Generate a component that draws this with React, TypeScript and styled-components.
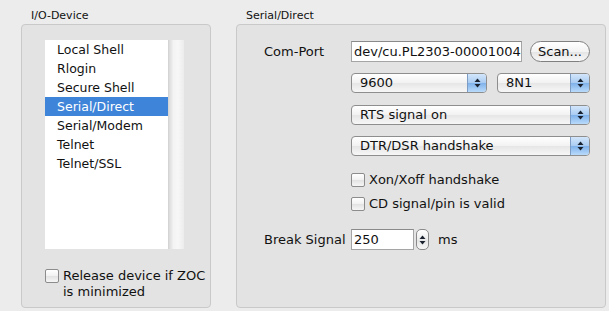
import styled, { createGlobalStyle } from 'styled-components';

const GlobalStyle = createGlobalStyle`
  html, body {
    margin: 0;
    padding: 0;
    background: #ececec;
    font-family: "DejaVu Sans", "Liberation Sans", sans-serif;
    color: #111;
  }
`;

const devices = ['Local Shell', 'Rlogin', 'Secure Shell', 'Serial/Direct', 'Serial/Modem', 'Telnet', 'Telnet/SSL'];

const Window = styled.div`
  width: 609px;
  height: 311px;
  display: flex;
  gap: 25px;
  padding: 9px 0 0 21px;
  box-sizing: border-box;
  overflow: hidden;
`;

const Group = styled.div<{ w: number }>`
  width: ${(p) => p.w}px;
  display: flex;
  flex-direction: column;
`;

const Legend = styled.div`
  font-size: 11px;
  height: 15px;
  line-height: 13px;
  padding-left: 10px;
`;

const Box = styled.div`
  height: 284px;
  background: #e3e3e3;
  border: 1px solid #c9c9c9;
  border-radius: 4px;
  box-sizing: border-box;
  display: flex;
  flex-direction: column;
`;

const LeftBox = styled(Box)`
  padding: 15px 0 0 23px;
`;

const ListFrame = styled.div`
  width: 139px;
  height: 209px;
  background: #fff;
  display: flex;
`;

const ListItems = styled.div`
  flex: 1;
  display: flex;
  flex-direction: column;
`;

const Item = styled.div<{ selected?: boolean }>`
  height: 19px;
  line-height: 19px;
  font-size: 12.5px;
  padding-left: 12px;
  background: ${(p) => (p.selected ? '#3e84d9' : 'transparent')};
  color: ${(p) => (p.selected ? '#fff' : '#111')};
`;

const ScrollTrack = styled.div`
  width: 15px;
  background: linear-gradient(90deg, #dadada 0%, #f4f4f4 30%, #f7f7f7 60%, #ececec 100%);
  border-left: 1px solid #d4d4d4;
`;

const CheckRow = styled.label<{ top: number }>`
  display: flex;
  align-items: flex-start;
  gap: 4px;
  margin-top: ${(p) => p.top}px;
  font-size: 13px;
  line-height: 16px;
`;

const CheckBox = styled.span`
  width: 12px;
  height: 12px;
  border: 1px solid #8c8c8c;
  border-radius: 2px;
  background: linear-gradient(180deg, #ffffff 0%, #f1f1f1 50%, #e2e2e2 51%, #f6f6f6 100%);
  flex-shrink: 0;
  margin-top: 1px;
`;

const RightBox = styled(Box)`
  padding: 16px 0 0 27px;
`;

const Row = styled.div<{ top: number }>`
  display: flex;
  align-items: center;
  margin-top: ${(p) => p.top}px;
`;

const Label = styled.div`
  width: 87px;
  font-size: 13px;
`;

const Controls = styled.div<{ top: number; gap?: number }>`
  display: flex;
  align-items: center;
  gap: ${(p) => p.gap ?? 8}px;
  margin-left: 87px;
  margin-top: ${(p) => p.top}px;
`;

const TextField = styled.div<{ w: number }>`
  width: ${(p) => p.w}px;
  height: 21px;
  box-sizing: border-box;
  background: #fff;
  border: 1px solid #a5a5a5;
  border-top-color: #8a8a8a;
  font-size: 13px;
  line-height: 19px;
  padding-left: 2px;
  overflow: hidden;
  white-space: nowrap;
`;

const ScanButton = styled.div`
  width: 60px;
  height: 21px;
  margin-left: 8px;
  box-sizing: border-box;
  border: 1px solid #808080;
  border-radius: 11px;
  background: linear-gradient(180deg, #ffffff 0%, #f3f3f3 50%, #e4e4e4 51%, #f8f8f8 100%);
  font-size: 13px;
  line-height: 19px;
  text-align: center;
`;

const Popup = styled.div<{ w: number }>`
  width: ${(p) => p.w}px;
  height: 20px;
  box-sizing: border-box;
  border: 1px solid #8e8e8e;
  border-radius: 4px;
  background: linear-gradient(180deg, #ffffff 0%, #f2f2f2 50%, #e6e6e6 51%, #f7f7f7 100%);
  display: flex;
  overflow: hidden;
  font-size: 13px;
  line-height: 18px;
`;

const PopupText = styled.div`
  flex: 1;
  padding-left: 8px;
`;

const PopupArrows = styled.div`
  width: 18px;
  border-left: 1px solid #7d9cc4;
  background: linear-gradient(180deg, #d3e6fb 0%, #a9cbf1 50%, #7fb1ea 51%, #b9dbfb 100%);
  display: flex;
  align-items: center;
  justify-content: center;
`;

const Arrows = () => (
  <svg width="7" height="10" viewBox="0 0 7 10">
    <path d="M3.5 0.5 L6.5 4 L0.5 4 Z" fill="#1a2230" />
    <path d="M3.5 9.5 L6.5 6 L0.5 6 Z" fill="#1a2230" />
  </svg>
);

const Stepper = styled.div`
  width: 13px;
  height: 21px;
  box-sizing: border-box;
  border: 1px solid #8a8a8a;
  border-radius: 5px;
  background: linear-gradient(180deg, #ffffff 0%, #ececec 50%, #e4e4e4 51%, #f7f7f7 100%);
  display: flex;
  align-items: center;
  justify-content: center;
  margin-left: 2px;
`;

const Unit = styled.div`
  font-size: 13px;
  margin-left: 9px;
`;

const PopupBox = ({ w, text }: { w: number; text: string }) => (
  <Popup w={w}>
    <PopupText>{text}</PopupText>
    <PopupArrows>
      <Arrows />
    </PopupArrows>
  </Popup>
);

export default function App() {
  return (
    <>
      <GlobalStyle />
      <Window>
        <Group w={190}>
          <Legend>I/O-Device</Legend>
          <LeftBox>
            <ListFrame>
              <ListItems>
                {devices.map((d) => (
                  <Item key={d} selected={d === 'Serial/Direct'}>
                    {d}
                  </Item>
                ))}
              </ListItems>
              <ScrollTrack />
            </ListFrame>
            <CheckRow top={19}>
              <CheckBox />
              <span>
                Release device if ZOC
                <br />
                is minimized
              </span>
            </CheckRow>
          </LeftBox>
        </Group>
        <Group w={370}>
          <Legend>Serial/Direct</Legend>
          <RightBox>
            <Row top={0}>
              <Label>Com-Port</Label>
              <TextField w={171}>dev/cu.PL2303-00001004</TextField>
              <ScanButton>Scan...</ScanButton>
            </Row>
            <Controls top={11} gap={10}>
              <PopupBox w={136} text="9600" />
              <PopupBox w={93} text="8N1" />
            </Controls>
            <Controls top={12}>
              <PopupBox w={239} text="RTS signal on" />
            </Controls>
            <Controls top={11}>
              <PopupBox w={239} text="DTR/DSR handshake" />
            </Controls>
            <Controls top={16}>
              <CheckRow top={0}>
                <CheckBox />
                <span>Xon/Xoff handshake</span>
              </CheckRow>
            </Controls>
            <Controls top={8}>
              <CheckRow top={0}>
                <CheckBox />
                <span>CD signal/pin is valid</span>
              </CheckRow>
            </Controls>
            <Row top={17}>
              <Label>Break Signal</Label>
              <TextField w={63}>250</TextField>
              <Stepper>
                <Arrows />
              </Stepper>
              <Unit>ms</Unit>
            </Row>
          </RightBox>
        </Group>
      </Window>
    </>
  );
}
